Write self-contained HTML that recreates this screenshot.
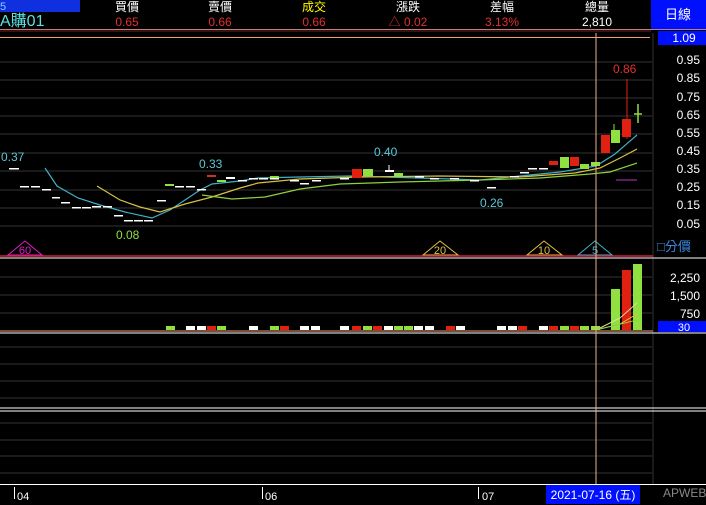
<!DOCTYPE html><html><head><meta charset="utf-8"><style>
body{margin:0;background:#000;width:706px;height:505px;overflow:hidden;font-family:"Liberation Sans","Noto Sans CJK TC",sans-serif}
svg{display:block}
</style></head><body>
<svg width="706" height="505" xmlns="http://www.w3.org/2000/svg" font-family="Liberation Sans, Noto Sans CJK TC, sans-serif">
<rect width="706" height="505" fill="#000"/>
<rect x="0" y="0" width="80" height="12" fill="#1030e0"/>
<text x="0" y="10" fill="#8cf" font-size="11">5</text>
<rect x="651" y="0" width="55" height="29" fill="#0010ff"/>
<text x="678" y="19" fill="#fff" font-size="13" text-anchor="middle">日線</text>
<g font-size="12" text-anchor="middle" fill="#fff">
<text x="127" y="11">買價</text><text x="220" y="11">賣價</text><text x="314" y="11" fill="#ff0">成交</text>
<text x="408" y="11">漲跌</text><text x="502" y="11">差幅</text><text x="597" y="11">總量</text></g>
<g font-size="12" text-anchor="middle" fill="#e03030">
<text x="127" y="26">0.65</text><text x="220" y="26">0.66</text><text x="314" y="26">0.66</text>
<text x="408" y="26">△ 0.02</text><text x="502" y="26">3.13%</text><text x="597" y="26" fill="#fff">2,810</text></g>
<text x="0" y="26" fill="#5ce0e0" font-size="16">A購01</text>
<line x1="0" y1="29.5" x2="706" y2="29.5" stroke="#c08080" stroke-width="1"/>
<line x1="0" y1="31" x2="651" y2="31" stroke="#702020"/>
<line x1="0" y1="37.5" x2="650" y2="37.5" stroke="#f0a070"/>
<rect x="658" y="31" width="48" height="14" fill="#0010ff"/>
<text x="684" y="42" fill="#fff" font-size="12" text-anchor="middle">1.09</text>
<g stroke="#333" stroke-width="1">
<line x1="0" y1="62" x2="652" y2="62"/><line x1="0" y1="80" x2="652" y2="80"/><line x1="0" y1="98" x2="652" y2="98"/><line x1="0" y1="116" x2="652" y2="116"/><line x1="0" y1="134" x2="652" y2="134"/><line x1="0" y1="153" x2="652" y2="153"/><line x1="0" y1="171" x2="652" y2="171"/><line x1="0" y1="190" x2="652" y2="190"/><line x1="0" y1="208" x2="652" y2="208"/><line x1="0" y1="226" x2="652" y2="226"/>
<line x1="0" y1="277" x2="652" y2="277"/><line x1="0" y1="295" x2="652" y2="295"/><line x1="0" y1="313" x2="652" y2="313"/>
<line x1="0" y1="347" x2="652" y2="347"/><line x1="0" y1="364" x2="652" y2="364"/><line x1="0" y1="381" x2="652" y2="381"/><line x1="0" y1="398" x2="652" y2="398"/>
<line x1="0" y1="423" x2="652" y2="423"/><line x1="0" y1="440" x2="652" y2="440"/><line x1="0" y1="456" x2="652" y2="456"/><line x1="0" y1="473" x2="652" y2="473"/>
<line x1="653" y1="33" x2="653" y2="484"/></g>
<g fill="#fff" font-size="12" text-anchor="end">
<text x="700" y="64">0.95</text><text x="700" y="82">0.85</text><text x="700" y="101">0.75</text><text x="700" y="119">0.65</text><text x="700" y="137">0.55</text><text x="700" y="155">0.45</text><text x="700" y="173">0.35</text><text x="700" y="191">0.25</text><text x="700" y="209">0.15</text><text x="700" y="228">0.05</text>
<text x="700" y="282">2,250</text><text x="700" y="300">1,500</text><text x="700" y="318">750</text></g>
<text x="657" y="251" fill="#3a8ae0" font-size="13">□分價</text>
<!-- MA lines -->
<polyline fill="none" stroke="#40b0c8" stroke-width="1.2" points="45,168 57,186 78,198 100,205 125,212 152,218 170,210 200,190 212,184 240,181 258,178 300,177 350,176 420,178 480,180 520,176 560,172 596,166 615,154 637,135"/>
<polyline fill="none" stroke="#d8c040" stroke-width="1.2" points="97,186 120,200 140,207 160,212 185,204 212,197 240,188 258,183 300,179 360,177 440,176 520,177 575,173 600,168 620,158 637,149"/>
<polyline fill="none" stroke="#90d040" stroke-width="1.2" points="202,195 232,199 265,197 300,189 340,184 400,182 480,180 540,178 590,174 610,172 637,163"/>
<!-- small candles dashes -->
<g fill="#fff">
<rect x="9" y="168" width="10" height="1.5"/><rect x="20" y="186" width="9" height="1.5"/><rect x="31" y="186" width="9" height="1.5"/><rect x="42" y="189" width="9" height="1.5"/><rect x="52" y="197" width="8" height="1.5"/><rect x="61" y="202" width="9" height="1.5"/><rect x="72" y="207" width="9" height="1.5"/><rect x="82" y="207" width="9" height="1.5"/><rect x="92" y="206" width="9" height="1.5"/><rect x="103" y="206" width="9" height="1.5"/><rect x="114" y="215" width="9" height="1.5"/><rect x="124" y="220" width="9" height="1.5"/><rect x="134" y="220" width="9" height="1.5"/><rect x="144" y="220" width="9" height="1.5"/><rect x="157" y="200" width="9" height="1.5"/><rect x="175" y="186" width="9" height="1.5"/><rect x="186" y="186" width="9" height="1.5"/><rect x="197" y="189" width="9" height="1.5"/><rect x="238" y="180" width="9" height="1.5"/><rect x="249" y="178" width="9" height="1.5"/><rect x="259" y="178" width="9" height="1.5"/><rect x="270" y="178" width="9" height="1.5"/><rect x="290" y="180" width="9" height="1.5"/><rect x="300" y="183" width="9" height="1.5"/><rect x="312" y="180" width="9" height="1.5"/><rect x="340" y="178" width="9" height="1.5"/><rect x="415" y="176" width="9" height="1.5"/><rect x="430" y="178" width="9" height="1.5"/><rect x="450" y="178" width="9" height="1.5"/><rect x="470" y="180" width="9" height="1.5"/><rect x="487" y="187" width="9" height="1.5"/><rect x="510" y="176" width="9" height="1.5"/><rect x="520" y="172" width="9" height="1.5"/><rect x="528" y="168" width="9" height="1.5"/><rect x="539" y="168" width="9" height="1.5"/></g>
<rect x="165" y="184" width="9" height="2" fill="#90e040"/><rect x="207" y="175" width="9" height="2" fill="#d03020"/><rect x="217" y="180" width="9" height="2" fill="#90e040"/><rect x="226" y="177" width="9" height="2" fill="#fff"/><rect x="270" y="176" width="9" height="2" fill="#90e040"/>
<rect x="352" y="169" width="10" height="9" fill="#e02010"/><rect x="363" y="169" width="10" height="7" fill="#90e040"/><rect x="385" y="170" width="9" height="2" fill="#fff"/><line x1="389" y1="165" x2="389" y2="170" stroke="#fff"/><rect x="394" y="173" width="9" height="4" fill="#90e040"/>
<rect x="549" y="161" width="9" height="4" fill="#e02010"/><rect x="560" y="157" width="9" height="11" fill="#90e040"/><rect x="570" y="157" width="9" height="9" fill="#e02010"/><rect x="580" y="164" width="9" height="5" fill="#90e040"/><rect x="591" y="162" width="9" height="4" fill="#90e040"/>
<line x1="614" y1="124" x2="614" y2="133" stroke="#90e040"/>
<rect x="601" y="135" width="9" height="18" fill="#e02010"/><rect x="611" y="130" width="9" height="13" fill="#90e040"/>
<line x1="627" y1="79" x2="627" y2="139" stroke="#e02010"/><rect x="622" y="119" width="9" height="18" fill="#e02010"/>
<line x1="634" y1="114" x2="642" y2="114" stroke="#90e040" stroke-width="1.5"/><line x1="638" y1="104" x2="638" y2="123" stroke="#90e040" stroke-width="1.5"/>
<line x1="616" y1="180" x2="637" y2="180" stroke="#c030c0"/>
<g font-size="12">
<text x="1" y="161" fill="#5cc8d8">0.37</text><text x="199" y="168" fill="#5cc8d8">0.33</text><text x="374" y="156" fill="#5cc8d8">0.40</text><text x="480" y="207" fill="#5cc8d8">0.26</text><text x="116" y="239" fill="#90e040">0.08</text><text x="613" y="73" fill="#e03030">0.86</text></g>
<!-- MA tags -->
<g font-size="11" text-anchor="middle" fill="none">
<polygon points="8,255 25,241 42,255" stroke="#e020c0"/><text x="25" y="254" fill="#e020c0">60</text>
<polygon points="423,255 440,241 458,255" stroke="#e0c040"/><text x="440" y="254" fill="#e0c040">20</text>
<polygon points="527,255 544,241 562,255" stroke="#e0c040"/><text x="544" y="254" fill="#e0c040">10</text>
<polygon points="578,255 595,241 612,255" stroke="#40b0c8"/><text x="595" y="254" fill="#40b0c8">5</text></g>
<line x1="0" y1="256" x2="653" y2="256" stroke="#d02040" stroke-width="1.5"/>
<line x1="0" y1="258" x2="706" y2="258" stroke="#fff"/>
<!-- volume -->
<g>
<rect x="166" y="326" width="9" height="4" fill="#90e040"/><rect x="186" y="326" width="9" height="4" fill="#fff"/><rect x="197" y="326" width="9" height="4" fill="#fff"/><rect x="207" y="326" width="9" height="4" fill="#e02010"/><rect x="217" y="326" width="9" height="4" fill="#90e040"/><rect x="249" y="326" width="9" height="4" fill="#fff"/><rect x="270" y="326" width="9" height="4" fill="#90e040"/><rect x="280" y="326" width="9" height="4" fill="#e02010"/><rect x="300" y="326" width="9" height="4" fill="#fff"/><rect x="311" y="326" width="9" height="4" fill="#fff"/>
<rect x="340" y="326" width="9" height="4" fill="#fff"/><rect x="352" y="326" width="9" height="4" fill="#e02010"/><rect x="363" y="326" width="9" height="4" fill="#90e040"/><rect x="373" y="326" width="9" height="4" fill="#e02010"/><rect x="384" y="326" width="9" height="4" fill="#fff"/><rect x="394" y="326" width="9" height="4" fill="#90e040"/><rect x="404" y="326" width="9" height="4" fill="#90e040"/><rect x="414" y="326" width="9" height="4" fill="#fff"/><rect x="425" y="326" width="9" height="4" fill="#fff"/><rect x="446" y="326" width="9" height="4" fill="#e02010"/><rect x="456" y="326" width="9" height="4" fill="#fff"/>
<rect x="497" y="326" width="9" height="4" fill="#fff"/><rect x="508" y="326" width="9" height="4" fill="#fff"/><rect x="518" y="326" width="9" height="4" fill="#e02010"/><rect x="539" y="326" width="9" height="4" fill="#fff"/><rect x="549" y="326" width="9" height="4" fill="#e02010"/><rect x="560" y="326" width="9" height="4" fill="#90e040"/><rect x="570" y="326" width="9" height="4" fill="#e02010"/><rect x="580" y="326" width="9" height="4" fill="#90e040"/><rect x="591" y="326" width="9" height="4" fill="#90e040"/>
<rect x="611" y="289" width="9" height="41" fill="#90e040"/><rect x="622" y="270" width="9" height="60" fill="#e02010"/><rect x="633" y="264" width="9" height="66" fill="#90e040"/>
<polyline fill="none" stroke="#e0e0a0" points="600,328 620,318 637,303"/><polyline fill="none" stroke="#d8c040" points="600,329 620,324 637,314"/><polyline fill="none" stroke="#90d040" points="600,329 637,320"/></g>
<rect x="658" y="321" width="48" height="11" fill="#0010ff"/><text x="684" y="331" fill="#fff" font-size="11" text-anchor="middle">30</text>
<line x1="0" y1="331" x2="653" y2="331" stroke="#f0a070"/><line x1="0" y1="333" x2="706" y2="333" stroke="#fff"/>
<line x1="0" y1="408" x2="706" y2="408" stroke="#fff"/><line x1="0" y1="411" x2="706" y2="411" stroke="#fff"/>
<line x1="0" y1="484.5" x2="706" y2="484.5" stroke="#fff"/>
<line x1="596" y1="33" x2="596" y2="484" stroke="#f0b090"/>
<g stroke="#fff"><line x1="14.5" y1="487" x2="14.5" y2="499"/><line x1="262.5" y1="487" x2="262.5" y2="499"/><line x1="478.5" y1="487" x2="478.5" y2="499"/></g>
<g fill="#fff" font-size="11"><text x="17" y="500">04</text><text x="265" y="500">06</text><text x="482" y="500">07</text></g>
<rect x="546" y="485" width="94" height="19" fill="#0010ff"/>
<text x="593" y="499" fill="#fff" font-size="12" text-anchor="middle">2021-07-16 (五)</text>
<text x="663" y="497" fill="#888" font-size="12">APWEB</text>
</svg>
</body></html>
